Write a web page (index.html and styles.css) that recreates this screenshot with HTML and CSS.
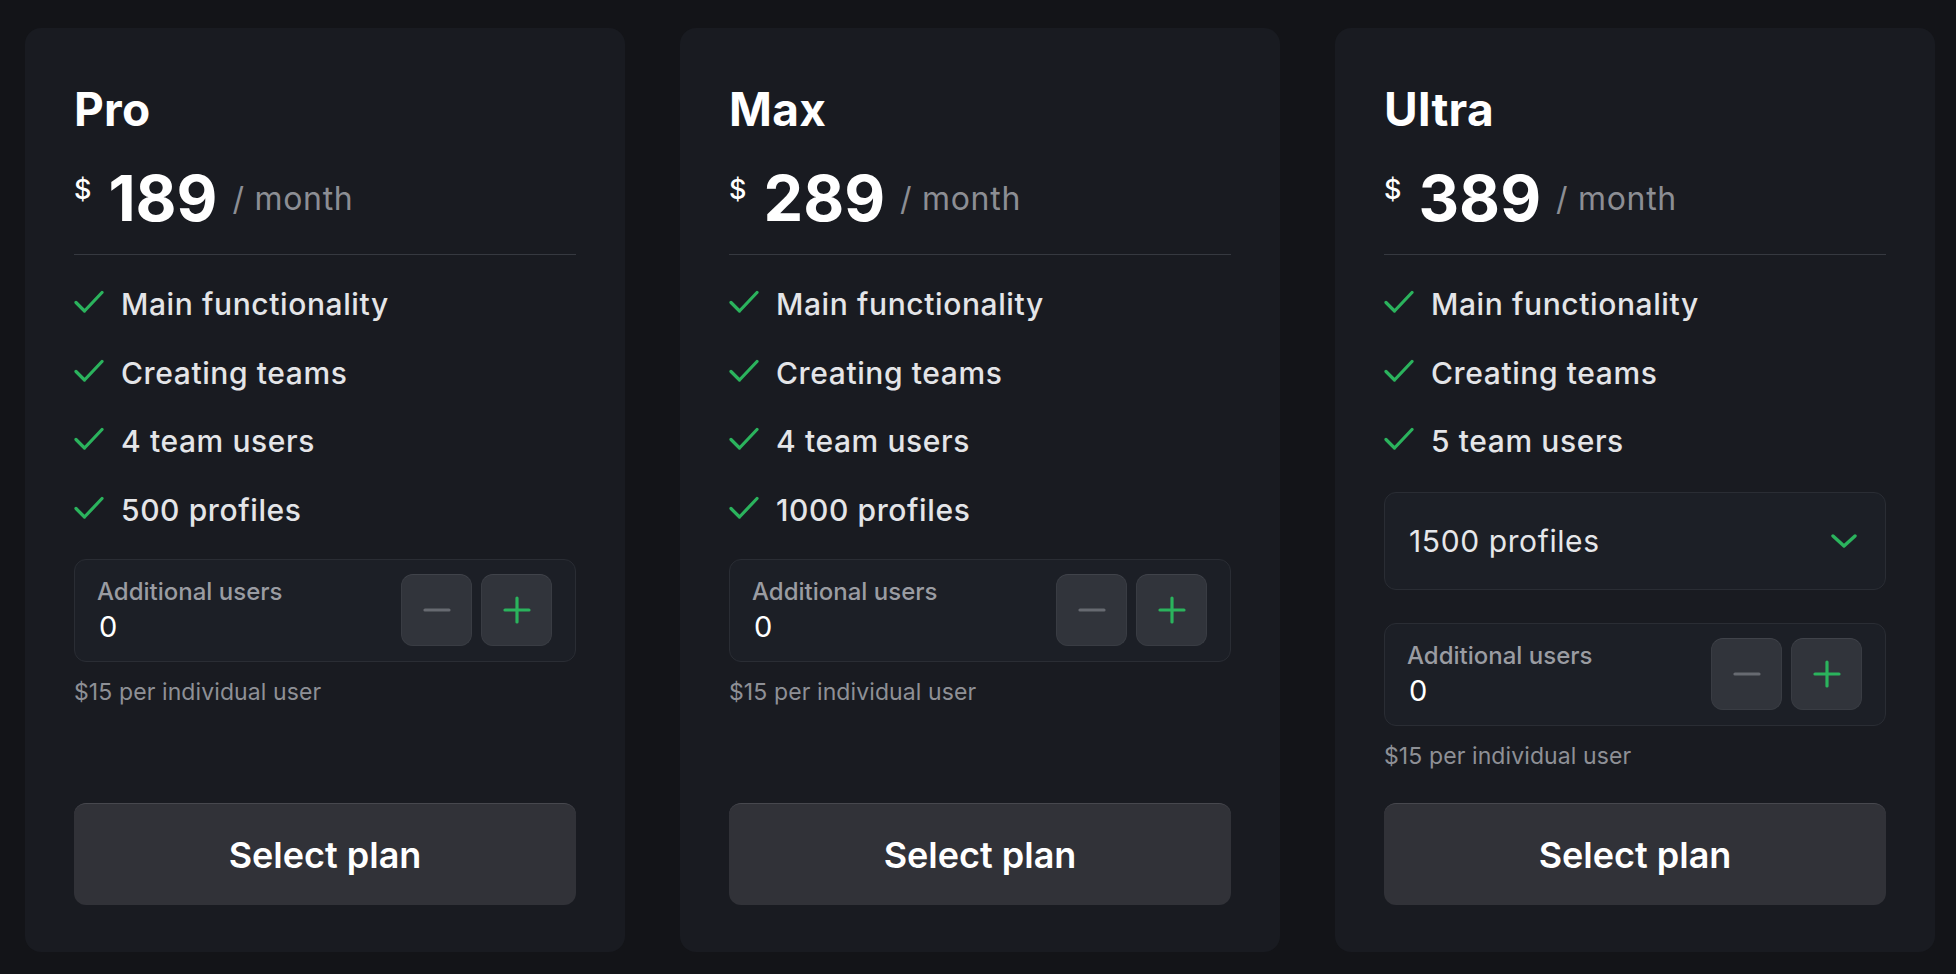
FILE: index.html
```html
<!DOCTYPE html>
<html lang="en">
<head>
<meta charset="utf-8">
<title>Plans</title>
<link rel="stylesheet" href="styles.css">
</head>
<body>
<main class="pricing">
  <section class="card">
    <h2 class="plan-name">Pro</h2>
    <div class="price">
      <span class="currency">$</span>
      <span class="amount">189</span>
      <span class="period">/ month</span>
    </div>
    <hr class="divider">
    <ul class="features">
      <li class="feature"><svg class="check" viewBox="0 0 30 24"><polyline points="2,12.5 10.5,21 28,2.5"/></svg><span>Main functionality</span></li>
      <li class="feature"><svg class="check" viewBox="0 0 30 24"><polyline points="2,12.5 10.5,21 28,2.5"/></svg><span>Creating teams</span></li>
      <li class="feature"><svg class="check" viewBox="0 0 30 24"><polyline points="2,12.5 10.5,21 28,2.5"/></svg><span>4 team users</span></li>
      <li class="feature"><svg class="check" viewBox="0 0 30 24"><polyline points="2,12.5 10.5,21 28,2.5"/></svg><span>500 profiles</span></li>
    </ul>
    <div class="addon">
      <div class="addon-text">
        <span class="addon-label">Additional users</span>
        <span class="addon-value">0</span>
      </div>
      <div class="stepper">
        <button class="step step-minus" type="button"><svg viewBox="0 0 28 4"><line x1="2" y1="2" x2="26" y2="2"/></svg></button>
        <button class="step step-plus" type="button"><svg viewBox="0 0 28 28"><line x1="14" y1="2" x2="14" y2="26"/><line x1="2" y1="14" x2="26" y2="14"/></svg></button>
      </div>
    </div>
    <p class="note">$15 per individual user</p>
    <button class="select" type="button">Select plan</button>
  </section>

  <section class="card">
    <h2 class="plan-name">Max</h2>
    <div class="price">
      <span class="currency">$</span>
      <span class="amount">289</span>
      <span class="period">/ month</span>
    </div>
    <hr class="divider">
    <ul class="features">
      <li class="feature"><svg class="check" viewBox="0 0 30 24"><polyline points="2,12.5 10.5,21 28,2.5"/></svg><span>Main functionality</span></li>
      <li class="feature"><svg class="check" viewBox="0 0 30 24"><polyline points="2,12.5 10.5,21 28,2.5"/></svg><span>Creating teams</span></li>
      <li class="feature"><svg class="check" viewBox="0 0 30 24"><polyline points="2,12.5 10.5,21 28,2.5"/></svg><span>4 team users</span></li>
      <li class="feature"><svg class="check" viewBox="0 0 30 24"><polyline points="2,12.5 10.5,21 28,2.5"/></svg><span>1000 profiles</span></li>
    </ul>
    <div class="addon">
      <div class="addon-text">
        <span class="addon-label">Additional users</span>
        <span class="addon-value">0</span>
      </div>
      <div class="stepper">
        <button class="step step-minus" type="button"><svg viewBox="0 0 28 4"><line x1="2" y1="2" x2="26" y2="2"/></svg></button>
        <button class="step step-plus" type="button"><svg viewBox="0 0 28 28"><line x1="14" y1="2" x2="14" y2="26"/><line x1="2" y1="14" x2="26" y2="14"/></svg></button>
      </div>
    </div>
    <p class="note">$15 per individual user</p>
    <button class="select" type="button">Select plan</button>
  </section>

  <section class="card">
    <h2 class="plan-name">Ultra</h2>
    <div class="price">
      <span class="currency">$</span>
      <span class="amount">389</span>
      <span class="period">/ month</span>
    </div>
    <hr class="divider">
    <ul class="features">
      <li class="feature"><svg class="check" viewBox="0 0 30 24"><polyline points="2,12.5 10.5,21 28,2.5"/></svg><span>Main functionality</span></li>
      <li class="feature"><svg class="check" viewBox="0 0 30 24"><polyline points="2,12.5 10.5,21 28,2.5"/></svg><span>Creating teams</span></li>
      <li class="feature"><svg class="check" viewBox="0 0 30 24"><polyline points="2,12.5 10.5,21 28,2.5"/></svg><span>5 team users</span></li>
    </ul>
    <div class="dropdown">
      <span class="dropdown-value">1500 profiles</span>
      <svg class="chevron" viewBox="0 0 26 14"><polyline points="2,2 13,12 24,2"/></svg>
    </div>
    <div class="addon addon-after-dropdown">
      <div class="addon-text">
        <span class="addon-label">Additional users</span>
        <span class="addon-value">0</span>
      </div>
      <div class="stepper">
        <button class="step step-minus" type="button"><svg viewBox="0 0 28 4"><line x1="2" y1="2" x2="26" y2="2"/></svg></button>
        <button class="step step-plus" type="button"><svg viewBox="0 0 28 28"><line x1="14" y1="2" x2="14" y2="26"/><line x1="2" y1="14" x2="26" y2="14"/></svg></button>
      </div>
    </div>
    <p class="note">$15 per individual user</p>
    <button class="select" type="button">Select plan</button>
  </section>
</main>
</body>
</html>
```

FILE: styles.css
```css
* {
  box-sizing: border-box;
}

html, body {
  margin: 0;
  padding: 0;
  background: #131418;
}

body {
  font-family: Inter, "Noto Sans", "Liberation Sans", sans-serif;
  color: #ffffff;
}

.pricing {
  height: 974px;
  padding: 28px 21px 22px 25px;
  display: grid;
  grid-template-columns: repeat(3, 600px);
  column-gap: 55px;
}

.card {
  background: #191b21;
  border-radius: 16px;
  padding: 53px 49px 47px 49px;
  display: flex;
  flex-direction: column;
}

.plan-name {
  margin: 0;
  font-size: 46px;
  line-height: 56px;
  font-weight: 700;
  letter-spacing: 0.3px;
  color: #ffffff;
}

.price {
  margin-top: 23px;
  display: flex;
  align-items: center;
  height: 76px;
}

.currency {
  align-self: flex-start;
  margin-top: 14px;
  font-size: 27px;
  line-height: 32px;
  font-weight: 500;
  margin-right: 17px;
  color: #ffffff;
}

.amount {
  font-size: 63px;
  line-height: 76px;
  font-weight: 700;
  letter-spacing: 0;
  margin-right: 15px;
  color: #ffffff;
}

.period {
  font-size: 32px;
  line-height: 39px;
  font-weight: 400;
  letter-spacing: 0.7px;
  color: #8c8e94;
}

.divider {
  margin: 18px 0 0 0;
  border: 0;
  height: 1px;
  background: #363940;
}

.features {
  list-style: none;
  margin: 29px 0 0 0;
  padding: 0;
  display: flex;
  flex-direction: column;
  gap: 28.5px;
}

.feature {
  display: flex;
  align-items: flex-start;
  height: 40px;
  font-size: 30px;
  line-height: 40px;
  font-weight: 500;
  letter-spacing: 0.6px;
  color: #e4e5e8;
}

.check {
  width: 30px;
  height: 24px;
  margin-top: 6px;
  margin-right: 17px;
  flex: none;
  fill: none;
  stroke: #2bb35d;
  stroke-width: 3.2;
  stroke-linecap: round;
  stroke-linejoin: round;
}

.dropdown {
  margin-top: 30.5px;
  height: 98px;
  border: 1px solid #2a2d34;
  border-radius: 12px;
  background: #1c1f26;
  display: flex;
  align-items: center;
  justify-content: space-between;
  padding: 0 28px 0 24px;
}

.dropdown-value {
  font-size: 30px;
  line-height: 40px;
  font-weight: 400;
  letter-spacing: 0.6px;
  color: #e6e7ea;
}

.chevron {
  width: 26px;
  height: 14px;
  fill: none;
  stroke: #2bb35d;
  stroke-width: 3.4;
  stroke-linecap: round;
  stroke-linejoin: round;
}

.addon {
  margin-top: 29px;
  height: 103px;
  border: 1px solid #2a2d34;
  border-radius: 12px;
  background: #1c1f26;
  display: flex;
  align-items: center;
  justify-content: space-between;
  padding: 0 23px 0 22px;
}

.addon-after-dropdown {
  margin-top: 33px;
}

.addon-text {
  display: flex;
  flex-direction: column;
  gap: 3.5px;
  padding-top: 3px;
}

.addon-label {
  font-size: 24px;
  line-height: 28px;
  font-weight: 500;
  color: #9a9ca2;
  letter-spacing: 0;
}

.addon-value {
  font-size: 29px;
  line-height: 36px;
  font-weight: 400;
  color: #ffffff;
  padding-left: 2px;
}

.stepper {
  display: flex;
  gap: 9px;
}

.step {
  width: 71px;
  height: 72px;
  border-radius: 12px;
  background: #31343b;
  border: 1px solid #393c43;
  border-top-color: #40434a;
  display: flex;
  align-items: center;
  justify-content: center;
  padding: 0;
}

.step svg {
  fill: none;
  stroke-width: 3.2;
  stroke-linecap: round;
}

.step-minus svg {
  width: 28px;
  height: 4px;
  stroke: #676a71;
}

.step-plus svg {
  width: 28px;
  height: 28px;
  stroke: #2bb35d;
}

.note {
  margin: 16px 0 0 0;
  font-size: 23px;
  line-height: 28px;
  font-weight: 400;
  color: #8e9096;
  letter-spacing: 0.1px;
}

.select {
  margin-top: auto;
  height: 102px;
  width: 100%;
  border: 0;
  border-top: 1px solid #47484e;
  border-radius: 12px;
  background: #313238;
  color: #ffffff;
  font-family: Inter, "Noto Sans", "Liberation Sans", sans-serif;
  font-size: 36px;
  font-weight: 600;
  letter-spacing: 0;
}
```
